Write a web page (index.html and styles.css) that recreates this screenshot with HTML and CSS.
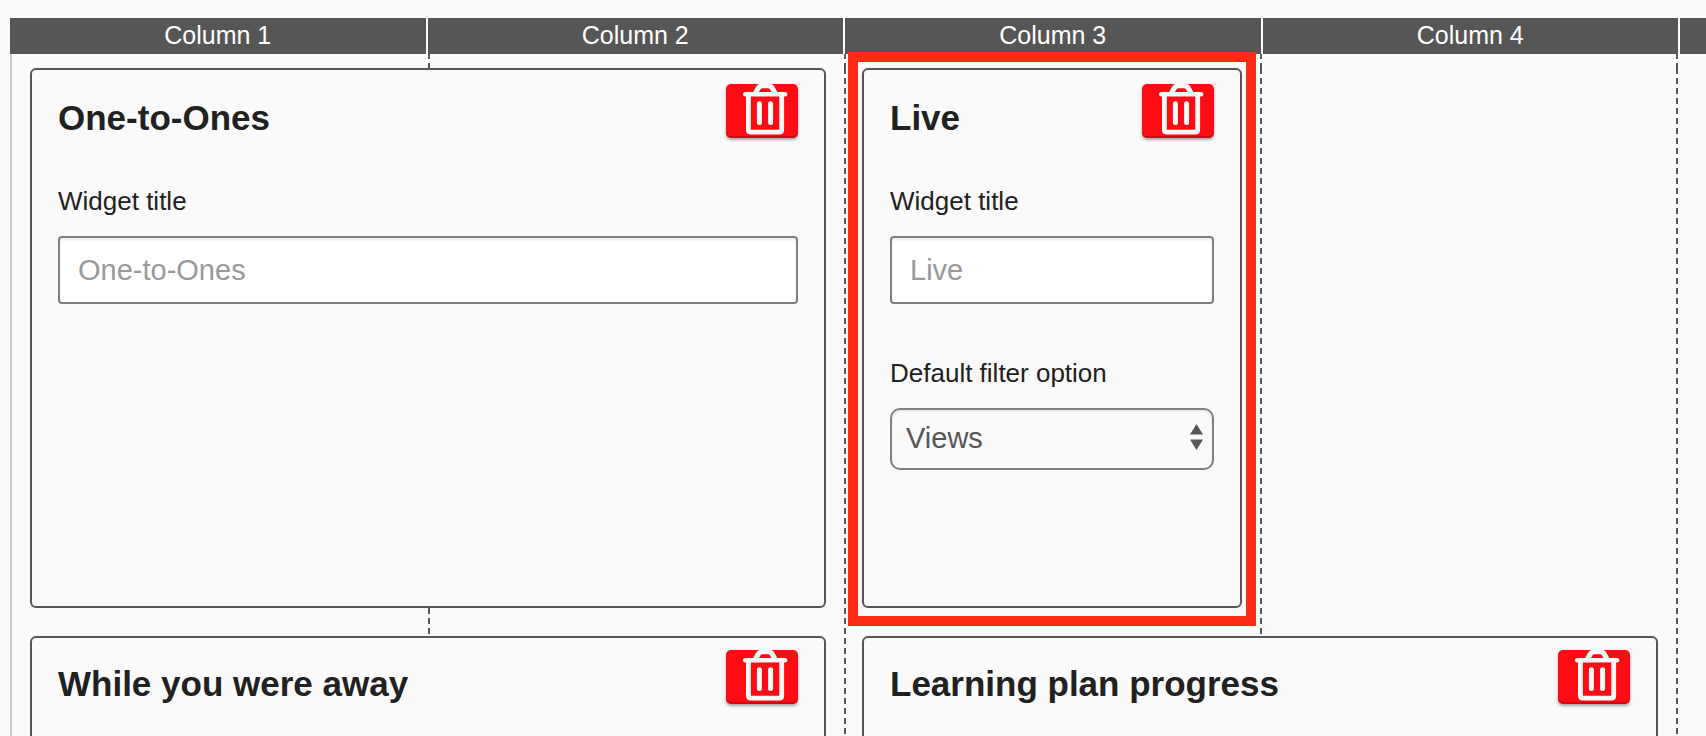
FILE: index.html
```html
<!DOCTYPE html>
<html lang="en">
<head>
    <meta charset="UTF-8">
    <meta name="viewport" content="width=device-width, initial-scale=1.0">
    <title>Dashboard Layout</title>
    <link rel="stylesheet" href="styles.css">
</head>
<body>
    <!-- Trash icon shared by all widgets -->
    <svg class="icon-defs" width="0" height="0" aria-hidden="true">
        <symbol id="icon-trash" viewBox="0 0 72 54">
            <g fill="none" stroke="#fafafa" stroke-linecap="round" stroke-linejoin="round">
                <path stroke-width="5" d="M29.5 9 L32 4.5 Q33.5 1.8 36.5 1.8 H42 Q45 1.8 46.5 4.5 L49 9"/>
                <path stroke-width="4.6" d="M19.3 10.2 H59"/>
                <path stroke-width="4.8" d="M22.4 10.2 V45.7 Q22.4 48.2 24.9 48.2 H53.2 Q55.7 48.2 55.7 45.7 V10.2"/>
                <path stroke-width="5" d="M33.4 19.8 V38.4 M44.6 19.8 V38.4"/>
            </g>
        </symbol>
    </svg>

    <div class="board">
        <div class="board-header">
            <div class="column-name">Column 1</div>
            <div class="column-name">Column 2</div>
            <div class="column-name">Column 3</div>
            <div class="column-name">Column 4</div>
            <div class="column-name"></div>
        </div>

        <div class="board-body">
            <div class="guides">
                <div class="guide"></div>
                <div class="guide"></div>
                <div class="guide"></div>
                <div class="guide"></div>
                <div class="guide"></div>
            </div>

            <div class="widgets">
                <section class="widget wide">
                    <div class="widget-head">
                        <h2 class="widget-title">One-to-Ones</h2>
                        <button class="delete" type="button" aria-label="Delete"><svg class="trash"><use href="#icon-trash"/></svg></button>
                    </div>
                    <div class="field">
                        <label for="one-to-ones-title">Widget title</label>
                        <input type="text" id="one-to-ones-title" placeholder="One-to-Ones">
                    </div>
                </section>

                <section class="widget highlighted">
                    <div class="widget-head">
                        <h2 class="widget-title">Live</h2>
                        <button class="delete" type="button" aria-label="Delete"><svg class="trash"><use href="#icon-trash"/></svg></button>
                    </div>
                    <div class="field">
                        <label for="live-title">Widget title</label>
                        <input type="text" id="live-title" placeholder="Live">
                    </div>
                    <div class="field">
                        <label for="live-filter">Default filter option</label>
                        <div class="select-wrap">
                            <select id="live-filter">
                                <option>Views</option>
                            </select>
                            <svg class="arrows" viewBox="0 0 13 26" aria-hidden="true">
                                <path fill="#565656" d="M6.5 0 L13 10.5 H0 Z M0 15.5 H13 L6.5 26 Z"/>
                            </svg>
                        </div>
                    </div>
                </section>

                <section class="widget wide compact next-row">
                    <div class="widget-head">
                        <h2 class="widget-title">While you were away</h2>
                        <button class="delete" type="button" aria-label="Delete"><svg class="trash"><use href="#icon-trash"/></svg></button>
                    </div>
                </section>

                <section class="widget wide compact">
                    <div class="widget-head">
                        <h2 class="widget-title">Learning plan progress</h2>
                        <button class="delete" type="button" aria-label="Delete"><svg class="trash"><use href="#icon-trash"/></svg></button>
                    </div>
                </section>
            </div>
        </div>
    </div>
</body>
</html>
```

FILE: styles.css
```css
* {
    box-sizing: border-box;
}

body {
    margin: 0;
    height: 100vh;
    overflow: hidden;
    font-family: "Liberation Sans", Arial, sans-serif;
    background-color: #fafafa;
    color: #212121;
}

.icon-defs {
    position: absolute;
}

.board {
    padding: 18px 0 0 10px;
}

.board-header {
    display: grid;
    grid-template-columns: repeat(4, 1fr) 26px;
}

.column-name {
    height: 36px;
    line-height: 34px;
    font-size: 25px;
    text-align: center;
    color: white;
    background-color: #565656;
    border-right: 2px solid white;
}

.column-name:last-child {
    border-right: none;
}

/* the guides and the widgets share one grid cell */
.board-body {
    display: grid;
    border-left: 2px solid #c8c8c8;
}

.guides {
    grid-area: 1 / 1;
    display: grid;
    grid-template-columns: repeat(4, 1fr) 30px;
}

/* dashed line on the left edge of each column */
.guide {
    background-image:
        linear-gradient(#565656, #565656),
        linear-gradient(#fafafa, #fafafa),
        linear-gradient(#565656, #565656),
        linear-gradient(#565656 60%, transparent 60%);
    background-size: 2px 5px, 2px 4px, 2px 11px, 2px 10px;
    background-position: 0 0, 0 5px, 0 9px, 0 4px;
    background-repeat: no-repeat, no-repeat, no-repeat, repeat-y;
}

.guide:first-child {
    background: none;
}

.widgets {
    grid-area: 1 / 1;
    display: grid;
    grid-template-columns: repeat(4, minmax(0, 1fr));
    grid-auto-rows: minmax(540px, auto);
    gap: 28px 36px;
    margin-right: 30px;
    padding: 14px 18px;
}

.widget {
    position: relative;
    padding: 14px 26px;
    background-color: #fafafa;
    border: 2px solid #565656;
    border-radius: 6px;
}

.widget.wide {
    grid-column-end: span 2;
}

.widget.compact {
    padding-top: 12px;
}

.widget.next-row {
    grid-column-start: 1;
}

.widget.highlighted::after {
    content: "";
    position: absolute;
    inset: -18px -16px -20px;
    border: 10px solid #ff2b14;
    pointer-events: none;
}

.widget-head {
    display: flex;
    justify-content: space-between;
    align-items: flex-start;
    margin-bottom: 48px;
}

.widget-title {
    margin: 12px 0 0;
    font-size: 35px;
    line-height: 44px;
}

.delete {
    flex: none;
    width: 72px;
    height: 54px;
    padding: 0;
    border: none;
    border-radius: 5px;
    background-color: #ff0b14;
    box-shadow: inset 0 -2px 0 rgba(0, 0, 0, 0.2), 0 2px 3px rgba(0, 0, 0, 0.35);
    overflow: hidden;
    cursor: pointer;
}

.trash {
    display: block;
    width: 72px;
    height: 54px;
}

.field {
    margin-bottom: 54px;
}

.widget-head + .field {
    margin-top: -2px;
}

.field label {
    display: block;
    margin-bottom: 20px;
    font-size: 26px;
    line-height: 30px;
}

.field input,
.field select {
    display: block;
    width: 100%;
    font-family: inherit;
    font-size: 29px;
    border: 2px solid #808080;
    box-shadow: inset 0 2px 3px rgba(0, 0, 0, 0.08);
}

.field input {
    height: 68px;
    padding: 0 18px;
    border-radius: 4px;
    background-color: white;
}

.field input::placeholder {
    color: #999;
    opacity: 1;
}

.field select {
    appearance: none;
    height: 62px;
    padding: 0 40px 2px 14px;
    border-radius: 10px;
    background-color: #fafafa;
    color: #565656;
}

.select-wrap {
    position: relative;
}

.arrows {
    position: absolute;
    top: 16px;
    right: 11px;
    width: 13px;
    height: 26px;
    pointer-events: none;
}
```
